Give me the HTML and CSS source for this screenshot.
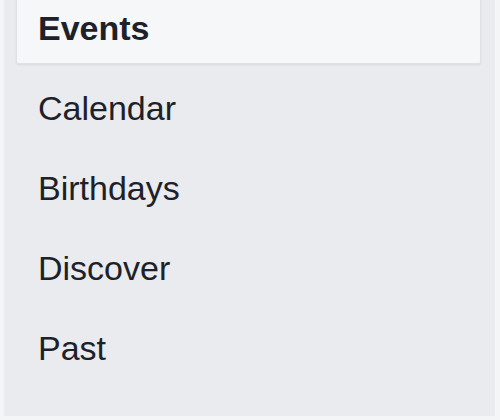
FILE: index.html
```html
<!DOCTYPE html>
<html lang="en">
<head>
<meta charset="UTF-8">
<meta name="viewport" content="width=device-width, initial-scale=1.0">
<title>Events</title>
<link rel="stylesheet" href="styles.css">
</head>
<body>

<div class="sidebar">
  <ul class="nav">
    <li class="nav-item active">Events</li>
    <li class="nav-item">Calendar</li>
    <li class="nav-item">Birthdays</li>
    <li class="nav-item">Discover</li>
    <li class="nav-item">Past</li>
  </ul>
</div>

</body>
</html>
```
FILE: styles.css
```css
body {
  margin: 0;
  background-color: #f4f5f7;
  font-family: "Liberation Sans", Arial, sans-serif;
  color: #1d2129;
}
.sidebar {
  height: 416px;
  margin: 0 5px 0 4px;
  background-color: #e9ebee;
  overflow: hidden;
}
.nav {
  list-style: none;
  margin: -13px 0 0 0;
  padding: 0 14px 0 12px;
  display: flex;
  flex-direction: column;
  gap: 3px;
}
.nav-item {
  padding: 21px 0 16px 21px;
  font-size: 34px;
  line-height: 38px;
  border: 1px solid transparent;
  border-radius: 2px;
}
.nav-item.active {
  font-weight: bold;
  background-color: #f6f7f9;
  border-color: #dfe1e5;
  box-shadow: 0 1px 2px rgba(0, 0, 0, 0.08);
}
```
